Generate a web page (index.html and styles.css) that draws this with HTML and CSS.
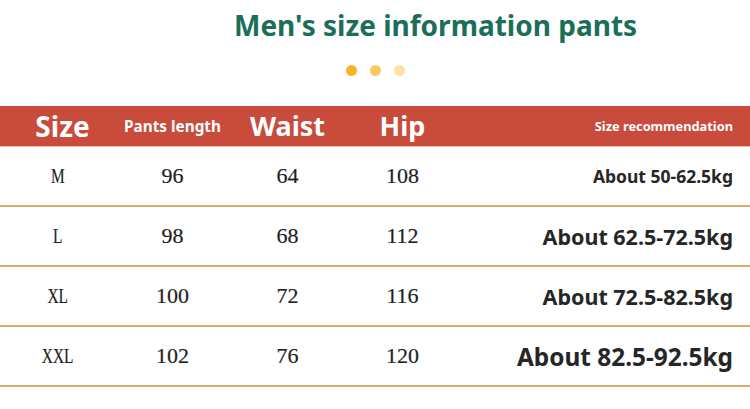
FILE: index.html
```html
<!DOCTYPE html>
<html>
<head>
<meta charset="utf-8">
<link rel="stylesheet" href="styles.css">
</head>
<body>
<div class="page">
  <h1 class="title">Men's size information pants</h1>
  <div class="dots"><span class="dot d1"></span><span class="dot d2"></span><span class="dot d3"></span></div>
  <div class="table">
    <div class="row head">
      <div class="cell c1 h-size">Size</div>
      <div class="cell h-small">Pants length</div>
      <div class="cell h-big">Waist</div>
      <div class="cell h-big">Hip</div>
      <div class="cell rec h-tiny">Size recommendation</div>
    </div>
    <div class="row">
      <div class="cell num"><span class="cond">M</span></div>
      <div class="cell num">96</div>
      <div class="cell num">64</div>
      <div class="cell num">108</div>
      <div class="cell rec r1">About 50-62.5kg</div>
    </div>
    <div class="row">
      <div class="cell num"><span class="cond">L</span></div>
      <div class="cell num">98</div>
      <div class="cell num">68</div>
      <div class="cell num">112</div>
      <div class="cell rec r2">About 62.5-72.5kg</div>
    </div>
    <div class="row">
      <div class="cell num"><span class="cond">XL</span></div>
      <div class="cell num">100</div>
      <div class="cell num">72</div>
      <div class="cell num">116</div>
      <div class="cell rec r2">About 72.5-82.5kg</div>
    </div>
    <div class="row">
      <div class="cell num"><span class="cond">XXL</span></div>
      <div class="cell num">102</div>
      <div class="cell num">76</div>
      <div class="cell num">120</div>
      <div class="cell rec r3">About 82.5-92.5kg</div>
    </div>
  </div>
</div>
</body>
</html>
```
FILE: styles.css
```css
* { box-sizing: border-box; }
html, body { margin: 0; padding: 0; background: #fff; }
body { width: 750px; height: 409px; overflow: hidden; font-family: "Noto Sans", "Open Sans", sans-serif; }
.page { padding-top: 5px; }
.title {
  margin: 0 0 0 234px;
  font-size: 28px;
  font-weight: 700;
  color: #1b6e5a;
  line-height: 40px;
  white-space: nowrap;
}
.dots { display: flex; justify-content: center; gap: 13px; margin-top: 20px; height: 10px; }
.dot { width: 11px; height: 11px; border-radius: 50%; display: block; }
.d1 { background: #f6b427; }
.d2 { background: #f8ca5e; }
.d3 { background: #fbe2a6; }
.table { margin-top: 31px; }
.row {
  display: grid;
  grid-template-columns: 115px 115px 115px 115px 1fr;
  height: 60px;
  align-items: center;
  border-bottom: 2px solid #e0ab68;
}
.row.head {
  height: 41px;
  background: #c84b3b;
  color: #fff;
  font-weight: 700;
  border-bottom: 1px solid #ebc08e;
}
.cell { text-align: center; white-space: nowrap; }
.c1 { padding-left: 10px; }
.h-size { font-size: 28px; line-height: 30px; }
.h-big { font-size: 27px; line-height: 30px; }
.h-small { font-size: 15.3px; }
.h-tiny { font-size: 12.8px; }
.rec { text-align: right; padding-right: 17px; }
.num { font-family: "Liberation Serif", serif; font-size: 22px; color: #1e1e1e; -webkit-text-stroke: 0.2px #1e1e1e; }
.cond { display: inline-block; transform: scaleX(0.7); }
.r1, .r2, .r3 { font-weight: 700; color: #262626; }
.r1 { font-size: 17.5px; }
.r2 { font-size: 21.5px; }
.r3 { font-size: 24.4px; }
```
